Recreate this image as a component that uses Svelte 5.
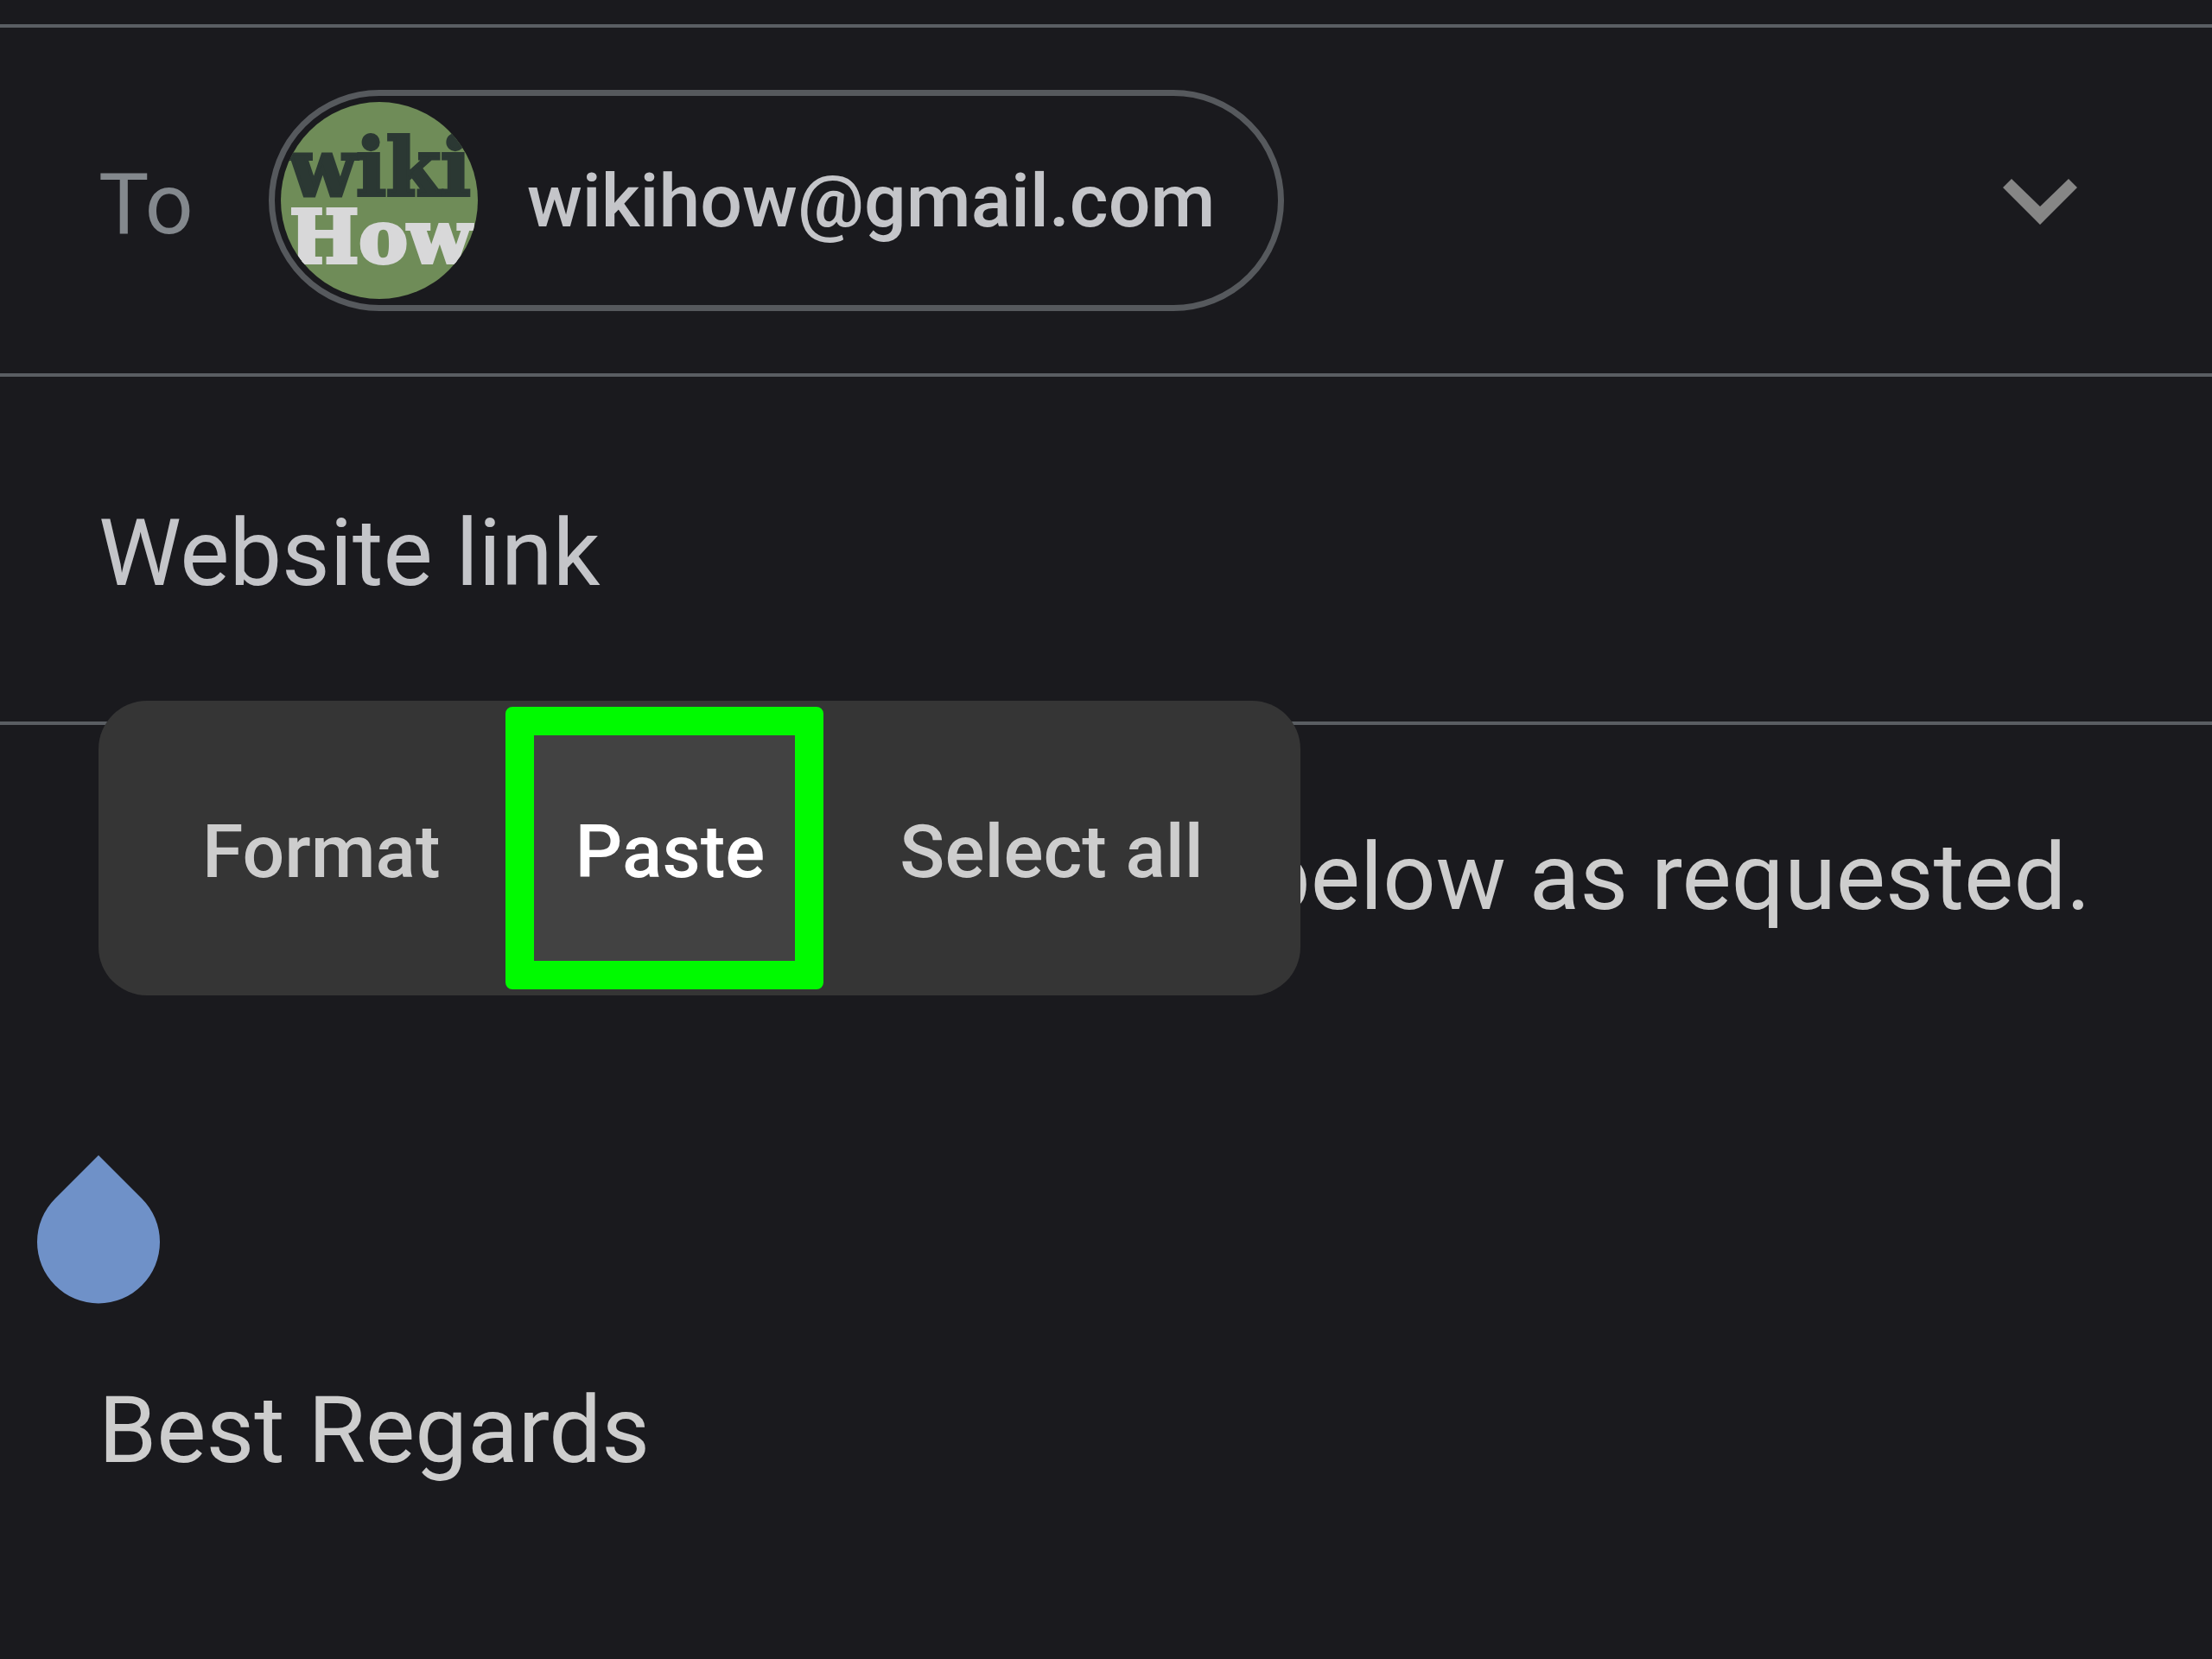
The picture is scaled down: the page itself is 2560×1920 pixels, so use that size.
<script lang="ts">
  let subject = 'Website link';
  let message = 'below as requested.\n\n\n\n\nBest Regards';

  const actions = [
    { id: 'format', label: 'Format' },
    { id: 'paste', label: 'Paste' },
    { id: 'select', label: 'Select all' }
  ];
  let current = 'paste';
</script>

<main>
  <div class="row to">
    <span class="label">To</span>
    <button class="chip">
      <svg class="avatar" viewBox="0 0 230 230" aria-hidden="true">
        <clipPath id="round"><circle cx="115" cy="115" r="114" /></clipPath>
        <g clip-path="url(#round)">
          <rect width="230" height="230" fill="#6f8c58" />
          <text class="logo" x="10" y="109" font-size="91" fill="#2b3833" stroke="#2b3833">wiki</text>
          <text class="logo" x="11" y="187" font-size="85" fill="#d8d8d9" stroke="#d8d8d9">How</text>
        </g>
      </svg>
      <span>wikihow@gmail.com</span>
    </button>
    <button class="expand" aria-label="Show Cc and Bcc">
      <svg width="86" height="54" viewBox="0 0 86 54">
        <path d="M10 0 43 32 76 0 86 10 43 53 0 10Z" fill="#868686" />
      </svg>
    </button>
  </div>

  <div class="row">
    <input class="subject" aria-label="Subject" bind:value={subject} />
  </div>

  <div class="body">
    <textarea aria-label="Message" spellcheck="false" bind:value={message}></textarea>

    <svg class="handle" width="142" height="172" viewBox="0 0 142 172" aria-hidden="true">
      <path d="M71 0 21 50A71 71 0 1 0 121 50Z" fill="#6f91c8" />
    </svg>

    <div class="menu">
      {#each actions as action}
        <button class:current={action.id === current} on:click={() => (current = action.id)}>
          <span>{action.label}</span>
        </button>
      {/each}
    </div>
  </div>
</main>

<style>
  :global(body) {
    margin: 0;
    background: #1a1a1e;
  }

  main {
    display: flex;
    flex-direction: column;
    min-height: 100vh;
    box-sizing: border-box;
    padding-top: 28px;
    font-family: Roboto, sans-serif;
    color: #cdcdcd;
  }

  button,
  input,
  textarea {
    font: inherit;
    color: inherit;
    background: none;
    border: 0;
    padding: 0;
    margin: 0;
    outline: 0;
  }

  .row {
    display: flex;
    align-items: center;
    height: 400px;
    padding: 0 156px 0 114px;
    border-top: 4px solid #5a5e63;
    color: #c4c5c9;
  }

  .label {
    width: 197px;
    padding-top: 8px;
    font-size: 98px;
    color: #83888d;
  }

  .chip {
    display: flex;
    align-items: center;
    gap: 56px;
    height: 256px;
    box-sizing: border-box;
    padding: 0 73px 0 6px;
    border: 7px solid #56595d;
    border-radius: 128px;
    font-size: 86px;
    font-weight: 500;
  }

  .avatar {
    width: 230px;
    height: 230px;
  }

  .logo {
    font-family: 'DejaVu Serif', serif;
    font-weight: 700;
    stroke-width: 4px;
  }

  .expand {
    display: flex;
    margin-left: auto;
    padding-top: 4px;
  }

  .subject {
    flex: 1;
    min-width: 0;
    padding-top: 8px;
    font-size: 108px;
  }

  .body {
    position: relative;
    flex: 1;
    display: flex;
    border-top: 4px solid #5a5e63;
    margin-top: -1px;
  }

  textarea {
    flex: 1;
    padding: 112px 60px 0 114px;
    font-size: 108px;
    line-height: 128px;
    text-indent: 1342px;
    resize: none;
    overflow: hidden;
  }

  /* hangs from the caret on the third line */
  .handle {
    position: absolute;
    top: 498px;
    left: 43px;
  }

  .menu {
    position: absolute;
    top: -28px;
    left: 114px;
    display: flex;
    height: 341px;
    box-sizing: border-box;
    padding: 0 34px 0 42px;
    border-radius: 56px;
    background: #353535;
  }

  .menu button {
    position: relative;
    padding: 8px 78px 0;
    font-size: 86px;
    font-weight: 500;
  }

  .menu span {
    position: relative;
  }

  .menu .current {
    color: #fff;
  }

  .menu .current::before {
    content: '';
    position: absolute;
    inset: 7px 10px 7px -3px;
    border: 33px solid #00fa00;
    border-radius: 8px;
    background: #424242;
  }
</style>
